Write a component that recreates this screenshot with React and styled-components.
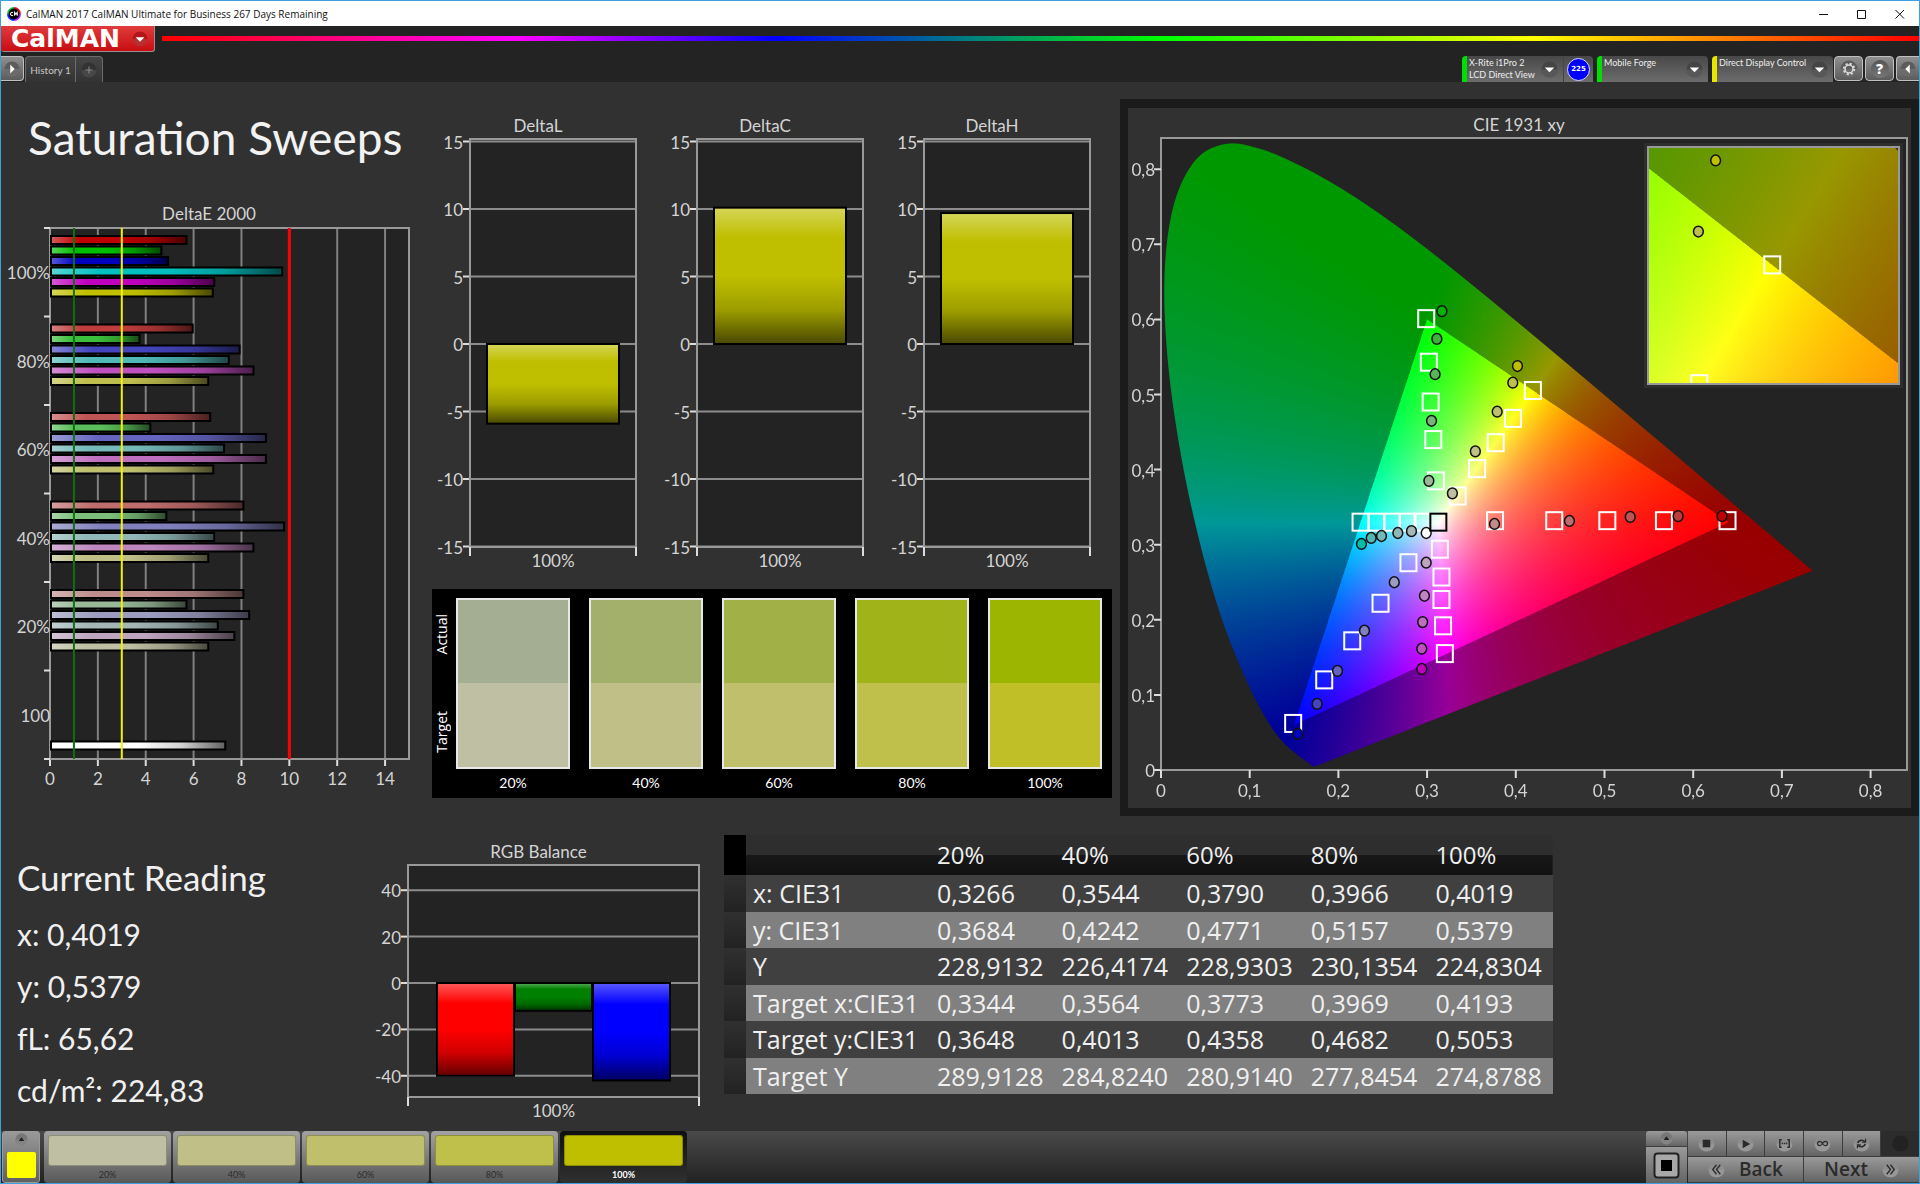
import React, { useEffect, useRef } from "react";
import styled, { createGlobalStyle, css } from "styled-components";

const GlobalStyle = createGlobalStyle`
  :root {
    --bg: #313131;
    --plot: #232323;
    --line: #8c8c8c;
    --text: #d4d4d4;
  }

  *, *::before, *::after {
    box-sizing: border-box;
  }

  body {
    margin: 0;
    background-color: var(--bg);
    font-family: Lato, "Open Sans", sans-serif;
    color: #f0f0f0;
  }

  button {
    padding: 0;
    border: 0;
    font: inherit;
    color: inherit;
    cursor: pointer;
  }

  svg {
    display: block;
  }
`;

/* ---------- window frame ---------- */

const Window = styled.div`
  display: flex;
  flex-direction: column;
  min-height: 100vh;
  border: 1px solid #3ea0dc;
`;

const TitleBar = styled.header`
  display: flex;
  align-items: center;
  height: 25px;
  padding: 0 14px 0 6px;
  gap: 5px;
  background-color: #fff;
  color: #111;
  font-family: "Open Sans", sans-serif;
  font-size: 10px;
`;

const WindowButtons = styled.div`
  display: flex;
  gap: 28px;
  margin-left: auto;
`;

const WindowButton = styled.button`
  width: 10px;
  height: 10px;
  background: none;
`;

const Chrome = styled.div`
  background-color: #232323;
`;

const BrandRow = styled.div`
  display: flex;
  align-items: flex-start;
  gap: 7px;
  height: 30px;
`;

const Brand = styled.button`
  display: flex;
  align-items: center;
  justify-content: space-between;
  width: 154px;
  height: 26px;
  padding: 0 6px 0 10px;
  border: solid #9a8f8f;
  border-width: 0 1px 1px 0;
  border-radius: 0 0 3px 3px;
  background: linear-gradient(#e03c3c, #c80d12);
  color: #fff;
  font-family: "DejaVu Sans", sans-serif;
  font-size: 25px;
  font-weight: 700;
  line-height: 24px;
`;

const Rainbow = styled.div`
  flex: 1;
  height: 5px;
  margin-top: 10px;
  background: linear-gradient(
    to right,
    #f00,
    #f0f 20%,
    #00f 35%,
    #0f0 57%,
    #ff0 78%,
    #f00
  );
`;

const Tabs = styled.div`
  display: flex;
  align-items: flex-end;
  height: 26px;
  gap: 1px;
`;

const TabGroup = styled.div`
  display: flex;
  height: 26px;
  border: 1px solid #6c6c6c;
  border-bottom: 0;
  border-radius: 4px 4px 0 0;
  background: linear-gradient(#464646, #333);
`;

const Tab = styled.button`
  display: flex;
  align-items: center;
  justify-content: center;
  width: ${({ $width }) => $width}px;
  border-right: ${({ $divided }) => ($divided ? "1px solid #6c6c6c" : 0)};
  background: none;
  color: #c8c8c8;
  font-size: 10px;
  white-space: nowrap;
`;

const Sources = styled.div`
  display: flex;
  align-items: flex-end;
  gap: 4px;
  margin-left: auto;
`;

const Source = styled.div`
  display: flex;
  align-items: center;
  width: ${({ $width }) => $width}px;
  height: 26px;
  border-left: 5px solid ${({ $color }) => $color};
  border-radius: 4px 4px 0 0;
  background: linear-gradient(#484848, #6c6c6c);
`;

const SourceButton = styled.button`
  flex: 1;
  display: flex;
  align-items: center;
  justify-content: space-between;
  height: 26px;
  padding: 0 5px 0 2px;
  background: none;
  color: #eee;
  font-size: 9px;
  line-height: 12px;
  text-align: left;
`;

const SourceName = styled.span`
  align-self: flex-start;
  padding-top: 1px;
  white-space: pre;
`;

const Level = styled.span`
  display: flex;
  align-items: center;
  justify-content: center;
  width: 30px;
  height: 26px;
  border-left: 1px solid #444;
`;

const LevelDot = styled.span`
  width: 23px;
  height: 23px;
  border: 1px solid #d8d8ff;
  border-radius: 50%;
  background-color: #00f;
  color: #fff;
  font-family: "DejaVu Sans", sans-serif;
  font-size: 7px;
  font-weight: 700;
  line-height: 21px;
  text-align: center;
`;

const Tools = styled.div`
  display: flex;
  gap: 2px;
`;

const ToolButton = styled.button`
  display: flex;
  align-items: center;
  justify-content: ${({ $cut }) => ($cut === "right" ? "flex-start" : "center")};
  width: ${({ $cut }) => ($cut ? 23 : 29)}px;
  height: 25px;
  margin-bottom: 1px;
  padding: 0 3px;
  border: 1px solid #c0c0c0;
  border-radius: 4px;
  background: linear-gradient(#8f8f8f, #5c5c5c);

  ${({ $cut }) =>
    $cut === "left" &&
    css`
      border-left: 0;
      border-radius: 0 4px 4px 0;
    `}
  ${({ $cut }) =>
    $cut === "right" &&
    css`
      border-right: 0;
      border-radius: 4px 0 0 4px;
    `}
`;

/* ---------- workspace ---------- */

const Main = styled.main`
  flex: 1;
  display: flex;
  flex-direction: column;
  background-color: var(--bg);
`;

const TopGrid = styled.section`
  display: grid;
  grid-template-columns: 431fr 688fr 799fr;
  align-items: start;
`;

const BottomGrid = styled.section`
  display: grid;
  grid-template-columns: 363fr 350fr 1205fr;
  align-items: start;
  padding-top: 19px;
`;

const Heading = styled.h1`
  margin: 24px 0 22px 27px;
  font-size: 46px;
  font-weight: 400;
  line-height: 64px;
  color: #f2f2f2;
`;

const Chart = styled.svg`
  width: 100%;
  height: auto;
  font-family: Lato, "Open Sans", sans-serif;
  font-size: 17px;
`;

const DeltaCharts = styled.div`
  display: grid;
  grid-template-columns: repeat(3, 1fr);
  padding: 27px 7px 10px 0;
`;

const Comparator = styled.div`
  display: flex;
  margin-right: 8px;
  padding: 9px 10px 0 0;
  height: 209px;
  background-color: #000;
  color: #fff;
  font-size: 14px;
`;

const SideLabels = styled.div`
  display: flex;
  flex-direction: column;
  justify-content: space-between;
  align-items: flex-start;
  width: 24px;
  height: 171px;
  padding: 16px 0;
  font-family: "Open Sans", sans-serif;
`;

const SideLabel = styled.span`
  writing-mode: vertical-rl;
  rotate: 180deg;
`;

const Swatches = styled.div`
  flex: 1;
  display: grid;
  grid-template-columns: repeat(5, 1fr);
  column-gap: 19px;
`;

const Swatch = styled.figure`
  margin: 0;
  text-align: center;
`;

const SwatchColor = styled.div`
  height: 171px;
  border: 2px solid #e8e8e8;
  background: linear-gradient(
    ${({ $actual }) => $actual} 50%,
    ${({ $target }) => $target} 50%
  );
`;

const SwatchLabel = styled.figcaption`
  line-height: 27px;
`;

const CiePanel = styled.div`
  margin-top: 17px;
  padding: 9px 8px 8px;
  background-color: #1b1b1b;
`;

const CieInner = styled.div`
  background-color: var(--bg);
`;

const Readings = styled.div`
  padding: 17px 0 0 16px;
`;

const ReadingTitle = styled.h2`
  margin: 0 0 6px;
  font-size: 35px;
  font-weight: 400;
  line-height: 50px;
`;

const Reading = styled.p`
  margin: 0;
  font-size: 30px;
  line-height: 52px;
`;

const Table = styled.table`
  width: 829px;
  height: 259px;
  margin-left: 10px;
  border-spacing: 0;
  font-family: "Open Sans", sans-serif;
  font-size: 25px;
  line-height: 36px;
  text-align: left;
  table-layout: fixed;

  th {
    font-weight: 400;
  }

  th, td {
    padding: 0 0 0 7px;
    white-space: nowrap;
  }

  th:first-child, td:first-child {
    width: 22px;
  }

  td:nth-child(2) {
    width: 184px;
  }
`;

const HeadRow = styled.tr`
  height: 40px;
  background: linear-gradient(#2e2e2e 50%, #181818 50%, #111);
  font-size: 24px;

  td:first-child {
    background-color: #000;
  }
`;

const BodyRow = styled.tr`
  background-color: ${({ $light }) => ($light ? "#808080" : "#404040")};

  td:first-child {
    background: linear-gradient(#303030, #222);
  }
`;

/* ---------- bottom bar ---------- */

const BottomBar = styled.footer`
  display: flex;
  height: 52px;
  padding-left: 1px;
  background: linear-gradient(#4a4a4a, #222);
`;

const PatternPicker = styled.button`
  display: flex;
  flex-direction: column;
  align-items: center;
  justify-content: space-between;
  width: 38px;
  margin-right: 4px;
  padding: 1px 0 4px;
  border: 1px solid #9a9a9a;
  border-radius: 3px;
  background: linear-gradient(#999, #606060);
`;

const PatternColor = styled.span`
  width: 29px;
  height: 26px;
  border-radius: 2px;
  background-color: #ff0;
`;

const PatternButton = styled.button`
  display: flex;
  flex-direction: column;
  align-items: center;
  width: 127px;
  margin-right: 2px;
  padding-top: 4px;
  border-radius: 4px;
  background: ${({ $active }) =>
    $active ? "linear-gradient(#101010, #303030)" : "linear-gradient(#a2a2a2, #585858)"};
  color: ${({ $active }) => ($active ? "#fff" : "#2b2b2b")};
  font-size: 9px;
  font-weight: ${({ $active }) => ($active ? 700 : 400)};
  line-height: 17px;

  &::before {
    content: "";
    width: 119px;
    height: 31px;
    border: 1px solid rgba(0, 0, 0, 0.25);
    border-radius: 3px;
    background-color: ${({ $color }) => $color};
  }
`;

const Transport = styled.div`
  display: flex;
  gap: 1px;
  margin-left: auto;
  color: #2b2b2b;
`;

const StopPanel = styled.div`
  display: flex;
  flex-direction: column;
  gap: 1px;
  width: 41px;
`;

const metal = css`
  display: flex;
  align-items: center;
  justify-content: center;
  background: linear-gradient(#9a9a9a, #646464);
`;

const StopTop = styled.button`
  ${metal}
  height: 15px;
  border-radius: 3px 3px 0 0;
`;

const StopMain = styled.button`
  ${metal}
  flex: 1;
`;

const TransportGrid = styled.div`
  display: grid;
  grid-template-columns: repeat(6, 1fr);
  grid-template-rows: 25px 25px;
  gap: 1px;
  width: 231px;
  background-color: #3c3c3c;
`;

const TransportButton = styled.button`
  ${metal}
  ${({ $off }) => $off && "background: #2c2c2c;"}
`;

const StepButton = styled.button`
  ${metal}
  grid-column: span 3;
  gap: 14px;
  color: #2b2b2b;
  font-family: "Open Sans", sans-serif;
  font-size: 19px;
  font-weight: 600;
  line-height: 25px;
`;

/* ---------- icons ---------- */

const glyphs = {
  down: <path d="M4 7h10l-5 5z" fill="#fff" />,
  left: <path d="M11 4v10L6 9z" fill="#fff" />,
  right: <path d="M7 4v10l5-5z" fill="#fff" />,
  up: <path d="M5 11h8L9 6z" fill="#222" />,
  plus: <path d="M9 5v8M5 9h8" stroke="#8a8a8a" strokeWidth="1.200" fill="none" />,
  stop: <path d="M5 5h8v8H5z" fill="#2b2b2b" />,
  play: <path d="M6 5v9l8-4.500z" fill="#2b2b2b" />,
  frames: (
    <path
      d="M6 5H4v8h2M12 5h2v8h-2M6 9h1.500M8.300 9h1.500M10.500 9h1.500"
      stroke="#2b2b2b"
      strokeWidth="1.500"
      fill="none"
    />
  ),
  loop: (
    <path
      d="M9 9c-1-1.600-1.800-2.300-3-2.300a2.300 2.300 0 0 0 0 4.600c1.200 0 2-.7 3-2.300s1.800-2.300 3-2.300a2.300 2.300 0 0 1 0 4.600c-1.200 0-2-.7-3-2.300z"
      stroke="#2b2b2b"
      strokeWidth="1.300"
      fill="none"
    />
  ),
  refresh: (
    <g stroke="#2b2b2b" strokeWidth="1.700" fill="none">
      <path d="M5 8.500C5.500 5.500 10 4.500 12.500 7M13 9.500c-.5 3-5 4-7.500 1.500" />
      <path d="M13.300 4v3.600H9.700M4.700 14v-3.600h3.600" strokeWidth="1.300" />
    </g>
  ),
  back: <path d="M9 4L5 9l4 5M13 4L9 9l4 5" stroke="#2b2b2b" strokeWidth="1.400" fill="none" />,
  next: <path d="M5 4l4 5-4 5M9 4l4 5-4 5" stroke="#2b2b2b" strokeWidth="1.400" fill="none" />,
  gear: (
    <g stroke="#ddd" fill="none">
      <circle cx="9" cy="9" r="4" strokeWidth="1.500" />
      <circle cx="9" cy="9" r="5.300" strokeWidth="1.800" strokeDasharray="2.080 2.080" />
    </g>
  ),
  none: null,
};

const Knob = ({ icon, size = 18, tone = "#5c5c5c" }) => (
  <svg width={size} height={size} viewBox="0 0 18 18" aria-hidden="true">
    <circle cx="9" cy="9" r="8.500" fill={tone} />
    {icon !== "none" && (
      <path d="M.5 9a8.500 8.500 0 0 0 17 0z" fill="#fff" opacity=".1" />
    )}
    {glyphs[icon]}
  </svg>
);

const HelpKnob = styled.span`
  width: 18px;
  height: 18px;
  border-radius: 50%;
  background: linear-gradient(#555, #777);
  color: #fff;
  font-family: "Open Sans", sans-serif;
  font-size: 14px;
  font-weight: 800;
  line-height: 18px;
`;

const AppIcon = () => (
  <svg width="14" height="14" viewBox="0 0 13 13" aria-hidden="true">
    <path d="M6.500 0A6.500 6.500 0 0 1 13 6.500H6.500z" fill="#e8102c" />
    <path d="M13 6.500A6.500 6.500 0 0 1 6.500 13V6.500z" fill="#b020f0" />
    <path d="M6.500 13A6.500 6.500 0 0 1 0 6.500h6.500z" fill="#1030ff" />
    <path d="M0 6.500A6.500 6.500 0 0 1 6.500 0v6.500z" fill="#10c040" />
    <circle cx="6.500" cy="6.500" r="5" fill="#000" />
    <path
      d="M5.500 5.200a1.500 1.500 0 1 0 0 2.600M7 8.200V5l1.200 1.800L9.500 5v3.200"
      stroke="#fff"
      fill="none"
    />
  </svg>
);

/* ---------- charts ---------- */

const Gloss = ({ id, horizontal }) => (
  <linearGradient id={id} x1="0" y1="0" x2={horizontal ? 1 : 0} y2={horizontal ? 0 : 1}>
    <stop offset="0" stopColor="#fff" stopOpacity=".35" />
    <stop offset=".22" stopColor="#fff" stopOpacity="0" />
    <stop offset=".5" stopColor="#000" stopOpacity="0" />
    <stop offset=".75" stopColor="#000" stopOpacity=".18" />
    <stop offset="1" stopColor="#000" stopOpacity=".62" />
  </linearGradient>
);

const ColumnChart = ({ id, title, size, plot, zero, unit, ticks, bars }) => {
  const [width, height] = size;
  const { left, top, right, bottom } = plot;
  const mid = (left + right) / 2;

  return (
    <Chart viewBox={`0 0 ${width} ${height}`} role="img" aria-label={title}>
      <defs>
        <Gloss id={id} />
      </defs>
      <text x={mid - 15} y={top - 7} textAnchor="middle" fill="var(--text)">
        {title}
      </text>
      <rect x={left} y={top} width={right - left} height={bottom - top} fill="var(--plot)" />
      {ticks.map((tick) => {
        const y = zero - tick * unit;
        return (
          <g key={tick}>
            <path d={`M${left} ${y}H${right}`} stroke="var(--line)" strokeWidth="2" />
            <path d={`M${left - 7} ${y}h7`} stroke="#ddd" strokeWidth="2" />
            <text x={left - 7} y={y + 7} textAnchor="end" fill="var(--text)">
              {tick}
            </text>
          </g>
        );
      })}
      <rect
        x={left}
        y={top}
        width={right - left}
        height={bottom - top}
        fill="none"
        stroke="#999"
        strokeWidth="2"
      />
      <path
        d={`M${left} ${bottom}v9M${right} ${bottom}v9`}
        stroke="#ddd"
        strokeWidth="2"
      />
      {bars.map(({ x, w, value, color }) => {
        const rect = {
          x,
          y: value > 0 ? zero - value * unit : zero,
          width: w,
          height: Math.abs(value) * unit,
        };
        return (
          <g key={color}>
            <rect {...rect} fill={color} />
            <rect {...rect} fill={`url(#${id})`} stroke="#000" strokeWidth="2" />
          </g>
        );
      })}
      <text x={mid} y={bottom + 20} textAnchor="middle" fill="var(--text)">
        100%
      </text>
    </Chart>
  );
};

const sweeps = [
  {
    label: "100%",
    bars: [[5.66, "#bf0000"], [4.61, "#00bf00"], [4.89, "#0000bf"], [9.66, "#00bfbf"], [6.82, "#bf00bf"], [6.76, "#bfbf00"]],
  },
  {
    label: "80%",
    bars: [[5.92, "#bf3c3c"], [3.7, "#3cbf3c"], [7.88, "#4444bf"], [7.43, "#50b8b8"], [8.46, "#bf50bf"], [6.57, "#bfbf50"]],
  },
  {
    label: "60%",
    bars: [[6.65, "#bf5454"], [4.15, "#5abf5a"], [8.98, "#6464bf"], [7.23, "#74b8b8"], [8.98, "#bf6ebf"], [6.78, "#bfbf6e"]],
  },
  {
    label: "40%",
    bars: [[8.04, "#bf6c6c"], [4.82, "#7cbf7c"], [9.74, "#8080bf"], [6.82, "#90b8b8"], [8.46, "#bf86bf"], [6.57, "#bfbf88"]],
  },
  {
    label: "20%",
    bars: [[8.04, "#bf8c8c"], [5.66, "#98b898"], [8.28, "#9c9cbf"], [6.97, "#a4b8b8"], [7.66, "#bfa4bf"], [6.57, "#bfbfa4"]],
  },
  { label: "100", bars: [[7.28, "#ffffff"]] },
];

const DeltaEChart = () => {
  const left = 49;
  const right = 408;
  const top = 36;
  const bottom = 567;
  const band = (bottom - top) / 6;
  const slotHeight = band / 8.43;
  const unit = (right - left) / 15;

  return (
    <Chart viewBox="0 0 431 600" role="img" aria-label="DeltaE 2000">
      <defs>
        <Gloss id="gloss-e" horizontal />
      </defs>
      <text x="208" y="28" textAnchor="middle" fill="var(--text)">
        DeltaE 2000
      </text>
      <rect x={left} y={top} width={right - left} height={bottom - top} fill="var(--plot)" />
      {[0, 2, 4, 6, 8, 10, 12, 14].map((tick) => {
        const x = left + tick * unit;
        return (
          <g key={tick}>
            <path d={`M${x} ${top}V${bottom}`} stroke="#808080" strokeWidth="2" />
            <path d={`M${x} ${bottom}v7`} stroke="#ddd" strokeWidth="2" />
            <text x={x} y={bottom + 26} textAnchor="middle" fill="var(--text)">
              {tick}
            </text>
          </g>
        );
      })}
      <rect
        x={left}
        y={top}
        width={right - left}
        height={bottom - top}
        fill="none"
        stroke="#999"
        strokeWidth="2"
      />
      {[0, 1, 2, 3, 4, 5, 6].map((n) => (
        <path
          key={n}
          d={`M${left - 6} ${top + n * band}h6`}
          stroke="#ddd"
          strokeWidth="2"
        />
      ))}
      {sweeps.map(({ label, bars }, row) => (
        <g key={label}>
          <text x={left} y={top + row * band + 51} textAnchor="end" fill="var(--text)">
            {label}
          </text>
          {bars.map(([value, color], i) => {
            const slot = bars.length === 1 ? 6 : i;
            const rect = {
              x: left + 1,
              y: top + row * band + slot * slotHeight + 8,
              width: value * unit,
              height: 8,
            };
            return (
              <g key={i}>
                <rect {...rect} fill={color} />
                <rect {...rect} fill="url(#gloss-e)" stroke="#000" strokeWidth="2" />
              </g>
            );
          })}
        </g>
      ))}
      <path d={`M${left + unit} ${top}V${bottom}`} stroke="#107010" strokeWidth="2" />
      <path d={`M${left + unit * 3} ${top}V${bottom}`} stroke="#f2f200" strokeWidth="2" />
      <path d={`M${left + unit * 10} ${top}V${bottom}`} stroke="#f00" strokeWidth="3" />
    </Chart>
  );
};

// CIE 1931 2° spectral locus, 380-700 nm
const locus = [
  [0.1741, 0.005], [0.1726, 0.0048], [0.1689, 0.0069], [0.1644, 0.0109], [0.1566, 0.0177],
  [0.144, 0.0297], [0.1355, 0.0399], [0.1241, 0.0578], [0.1096, 0.0868], [0.0913, 0.1327],
  [0.0687, 0.2007], [0.0454, 0.295], [0.0235, 0.4127], [0.0082, 0.5384], [0.0039, 0.6548],
  [0.0139, 0.7502], [0.0389, 0.812], [0.0743, 0.8338], [0.1142, 0.8262], [0.1547, 0.8059],
  [0.1929, 0.7816], [0.2296, 0.7543], [0.2658, 0.7243], [0.3016, 0.6923], [0.3373, 0.6589],
  [0.3731, 0.6245], [0.4087, 0.5896], [0.4441, 0.5547], [0.4788, 0.5202], [0.5125, 0.4866],
  [0.5448, 0.4544], [0.5752, 0.4242], [0.6029, 0.3965], [0.627, 0.3725], [0.6482, 0.3514],
  [0.6658, 0.334], [0.6915, 0.3083], [0.7079, 0.292], [0.719, 0.2809], [0.7347, 0.2653],
];

const paint = (canvas, { x0, x1, y0, y1 }) => {
  const { width, height } = canvas;
  const ctx = canvas.getContext("2d");
  const image = ctx.createImageData(width, height);

  for (let row = 0; row < height; row += 1) {
    const y = Math.max(y1 - ((row + 0.5) / height) * (y1 - y0), 0.0001);
    for (let col = 0; col < width; col += 1) {
      const x = x0 + ((col + 0.5) / width) * (x1 - x0);
      const z = 1 - x - y;
      const rgb = [
        3.2406 * x - 1.5372 * y - 0.4986 * z,
        -0.9689 * x + 1.8758 * y + 0.0415 * z,
        0.0557 * x - 0.204 * y + 1.057 * z,
      ];
      // colours beyond the Rec. 709 triangle are dimmed
      const level = Math.min(...rgb) < 0 ? 152 : 255;
      const max = Math.max(...rgb);
      const at = (row * width + col) * 4;
      rgb.forEach((c, i) => {
        image.data[at + i] = (Math.max(c, 0) / max) * level;
      });
      image.data[at + 3] = 255;
    }
  }
  ctx.putImageData(image, 0, 0);

  // smooth closed outline through the locus points
  const points = locus.map(([x, y]) => [
    ((x - x0) / (x1 - x0)) * width,
    ((y1 - y) / (y1 - y0)) * height,
  ]);
  const at = (i) => points[Math.min(Math.max(i, 0), points.length - 1)];
  ctx.globalCompositeOperation = "destination-in";
  ctx.beginPath();
  ctx.moveTo(...points[0]);
  for (let i = 0; i < points.length - 1; i += 1) {
    const [a, b, c, d] = [at(i - 1), at(i), at(i + 1), at(i + 2)];
    ctx.bezierCurveTo(
      b[0] + (c[0] - a[0]) / 6,
      b[1] + (c[1] - a[1]) / 6,
      c[0] - (d[0] - b[0]) / 6,
      c[1] - (d[1] - b[1]) / 6,
      c[0],
      c[1]
    );
  }
  ctx.closePath();
  ctx.fill();
};

const GamutCanvas = styled.canvas`
  display: block;
  width: 100%;
  height: 100%;
`;

const Gamut = ({ width, height, domain }) => {
  const ref = useRef(null);
  useEffect(() => paint(ref.current, domain), [domain]);
  return <GamutCanvas ref={ref} width={width * 2} height={height * 2} />;
};

const targets = [
  [0.299, 0.601], [0.302, 0.543], [0.304, 0.49], [0.307, 0.44], [0.31, 0.385],
  [0.4193, 0.5053], [0.3969, 0.4682], [0.3773, 0.4358], [0.3564, 0.4013], [0.3344, 0.3648],
  [0.225, 0.33], [0.243, 0.33], [0.2604, 0.33], [0.278, 0.33], [0.295, 0.33],
  [0.3766, 0.332], [0.4433, 0.332], [0.5032, 0.332], [0.567, 0.332], [0.6387, 0.332],
  [0.3144, 0.294], [0.3162, 0.257], [0.3162, 0.227], [0.318, 0.192], [0.32, 0.155],
  [0.279, 0.276], [0.2475, 0.222], [0.2156, 0.172], [0.184, 0.12], [0.149, 0.062],
];

const actuals = [
  [0.3167, 0.611, "#00b400"], [0.311, 0.574, "#3cb43c"], [0.309, 0.527, "#5ab45a"],
  [0.305, 0.465, "#78b478"], [0.302, 0.385, "#98b898"],
  [0.4019, 0.5379, "#bfbf00"], [0.3966, 0.5157, "#bfbf50"], [0.379, 0.4771, "#bfbf6e"],
  [0.3544, 0.4242, "#bfbf88"], [0.3285, 0.3684, "#bfbfa4"],
  [0.226, 0.301, "#00bfa8"], [0.237, 0.309, "#50b8b0"], [0.2486, 0.3116, "#74b8b8"],
  [0.267, 0.3156, "#90b8b8"], [0.2824, 0.318, "#a4b8b8"], [0.299, 0.3156, "#ffffff"],
  [0.376, 0.3276, "#bf8c8c"], [0.4605, 0.3316, "#bf6c6c"], [0.529, 0.337, "#bf5454"],
  [0.583, 0.338, "#bf3c3c"], [0.6325, 0.338, "#bf0000"],
  [0.299, 0.276, "#bfa4bf"], [0.297, 0.232, "#bf86bf"], [0.295, 0.197, "#bf6ebf"],
  [0.294, 0.1615, "#bf50bf"], [0.294, 0.1345, "#bf00bf"],
  [0.263, 0.25, "#9c9cbf"], [0.2294, 0.1855, "#8080bf"], [0.199, 0.132, "#6464bf"],
  [0.176, 0.088, "#4444bf"], [0.154, 0.048, "#0000bf"],
];

const Markers = ({ px, py }) => (
  <>
    {targets.map(([x, y]) => (
      <rect
        key={`${x}-${y}`}
        x={px(x) - 8}
        y={py(y) - 8.5}
        width="16"
        height="17"
        fill="none"
        stroke="#fff"
        strokeWidth="2"
      />
    ))}
    {actuals.map(([x, y, color]) => (
      <ellipse
        key={`${x}-${y}`}
        cx={px(x)}
        cy={py(y)}
        rx="4.900"
        ry="5.400"
        fill={color}
        stroke="#111"
        strokeWidth="1.500"
      />
    ))}
  </>
);

const fullDomain = { x0: 0, x1: 0.841, y0: 0, y1: 0.8415 };
const insetDomain = { x0: 0.3811, x1: 0.4583, y0: 0.4681, y1: 0.5421 };

const CieChart = () => {
  const left = 33;
  const bottom = 662;
  const px = (x) => left + x * 887;
  const py = (y) => bottom - y * 751;
  const inset = { x: 520, y: 39, width: 251, height: 237 };
  const ix = (x) => inset.x + ((x - insetDomain.x0) / 0.0772) * inset.width;
  const iy = (y) => inset.y + ((insetDomain.y1 - y) / 0.074) * inset.height;
  const steps = [0, 1, 2, 3, 4, 5, 6, 7, 8];
  const label = (n) => (n ? `0,${n}` : "0");

  return (
    <Chart viewBox="0 0 783 700" role="img" aria-label="CIE 1931 xy">
      <clipPath id="inset-clip">
        <rect {...inset} />
      </clipPath>
      <text x="391" y="23" textAnchor="middle" fill="var(--text)">
        CIE 1931 xy
      </text>
      <rect x={left} y="30" width="746" height="632" fill="var(--plot)" />
      <foreignObject x={left} y="30" width="746" height="632">
        <Gamut width={746} height={632} domain={fullDomain} />
      </foreignObject>
      <rect x={left} y="30" width="746" height="632" fill="none" stroke="#999" strokeWidth="2" />
      {steps.map((n) => (
        <g key={n} fill="var(--text)">
          <path
            d={`M${px(n / 10)} ${bottom}v8M${left} ${py(n / 10)}h-7`}
            stroke="#ddd"
            strokeWidth="2"
          />
          <text x={px(n / 10)} y={bottom + 27} textAnchor="middle">
            {label(n)}
          </text>
          <text x={left - 6} y={py(n / 10) + 7} textAnchor="end">
            {label(n)}
          </text>
        </g>
      ))}
      <Markers px={px} py={py} />
      <rect
        x={px(0.3127) - 8}
        y={py(0.33) - 8.5}
        width="16"
        height="17"
        fill="none"
        stroke="#000"
        strokeWidth="2"
      />

      <rect x="516" y="35" width="259" height="245" fill="#2e2e2e" />
      <foreignObject {...inset}>
        <Gamut width={251} height={237} domain={insetDomain} />
      </foreignObject>
      <g clipPath="url(#inset-clip)">
        <Markers px={ix} py={iy} />
      </g>
      <rect {...inset} fill="none" stroke="#999" strokeWidth="2" />
    </Chart>
  );
};

/* ---------- data ---------- */

const deltaCharts = [
  { title: "DeltaL", value: -5.9 },
  { title: "DeltaC", value: 10.1 },
  { title: "DeltaH", value: 9.7 },
];

const rgbBars = [
  { x: 73, w: 77, value: -40, color: "#ff0000" },
  { x: 151, w: 77, value: -12, color: "#008000" },
  { x: 229, w: 77, value: -42, color: "#0000ff" },
];

const swatches = [
  { label: "20%", actual: "#a4ae92", target: "#bfbfa3", pattern: "#bfbfa3" },
  { label: "40%", actual: "#a2b06c", target: "#bfbf87", pattern: "#bfbf87" },
  { label: "60%", actual: "#a1b148", target: "#bfbf6c", pattern: "#bfbf6c" },
  { label: "80%", actual: "#a0b318", target: "#bfbf4c", pattern: "#bfbf4c" },
  { label: "100%", actual: "#9bb500", target: "#c1bf28", pattern: "#bfbf00" },
];

const readings = ["x: 0,4019", "y: 0,5379", "fL: 65,62", "cd/m²: 224,83"];

const rows = [
  ["x: CIE31", "0,3266", "0,3544", "0,3790", "0,3966", "0,4019"],
  ["y: CIE31", "0,3684", "0,4242", "0,4771", "0,5157", "0,5379"],
  ["Y", "228,9132", "226,4174", "228,9303", "230,1354", "224,8304"],
  ["Target x:CIE31", "0,3344", "0,3564", "0,3773", "0,3969", "0,4193"],
  ["Target y:CIE31", "0,3648", "0,4013", "0,4358", "0,4682", "0,5053"],
  ["Target Y", "289,9128", "284,8240", "280,9140", "277,8454", "274,8788"],
];

const sources = [
  { name: "X-Rite i1Pro 2\nLCD Direct View", color: "#00e000", width: 131, level: 225 },
  { name: "Mobile Forge", color: "#00e000", width: 111 },
  { name: "Direct Display Control", color: "#e6e600", width: 121 },
];

const transport = ["stop", "play", "frames", "loop", "refresh", "none"];

const App = () => (
  <Window>
    <GlobalStyle />
    <TitleBar>
      <AppIcon />
      CalMAN 2017 CalMAN Ultimate for Business 267 Days Remaining
      <WindowButtons>
        {[
          ["Minimize", "M0 5.500h9"],
          ["Maximize", "M.5 1.500h8v8h-8z"],
          ["Close", "M.5 1l8.500 8.500M9 1L.5 9.500"],
        ].map(([name, d]) => (
          <WindowButton key={name} aria-label={name}>
            <svg width="10" height="10" viewBox="0 0 10 10">
              <path d={d} stroke="#111" fill="none" />
            </svg>
          </WindowButton>
        ))}
      </WindowButtons>
    </TitleBar>

    <Chrome>
      <BrandRow>
        <Brand>
          CalMAN
          <Knob icon="down" tone="#b3161a" size={16} />
        </Brand>
        <Rainbow />
      </BrandRow>
      <Tabs>
        <ToolButton $cut="left" aria-label="Expand">
          <Knob icon="right" />
        </ToolButton>
        <TabGroup>
          <Tab $width={50} $divided>
            History 1
          </Tab>
          <Tab $width={26} aria-label="Add tab">
            <Knob icon="plus" size={16} tone="#333" />
          </Tab>
        </TabGroup>
        <Sources>
          {sources.map(({ name, color, width, level }) => (
            <Source key={name} $color={color} $width={width}>
              <SourceButton>
                <SourceName>{name}</SourceName>
                <Knob icon="down" size={17} tone="#444" />
              </SourceButton>
              {level && (
                <Level>
                  <LevelDot>{level}</LevelDot>
                </Level>
              )}
            </Source>
          ))}
        </Sources>
        <Tools>
          <ToolButton aria-label="Settings">
            <Knob icon="gear" />
          </ToolButton>
          <ToolButton aria-label="Help">
            <HelpKnob>?</HelpKnob>
          </ToolButton>
          <ToolButton $cut="right" aria-label="Collapse">
            <Knob icon="left" />
          </ToolButton>
        </Tools>
      </Tabs>
    </Chrome>

    <Main>
      <TopGrid>
        <div>
          <Heading>Saturation Sweeps</Heading>
          <DeltaEChart />
        </div>
        <div>
          <DeltaCharts>
            {deltaCharts.map(({ title, value }) => (
              <ColumnChart
                key={title}
                id={`gloss-${title}`}
                title={title}
                size={[227, 470]}
                plot={{ left: 38, top: 30, right: 204, bottom: 438 }}
                zero={235}
                unit={13.5}
                ticks={[15, 10, 5, 0, -5, -10, -15]}
                bars={[{ x: 55, w: 132, value, color: "#bfbf00" }]}
              />
            ))}
          </DeltaCharts>
          <Comparator>
            <SideLabels>
              <SideLabel>Actual</SideLabel>
              <SideLabel>Target</SideLabel>
            </SideLabels>
            <Swatches>
              {swatches.map(({ label, actual, target }) => (
                <Swatch key={label}>
                  <SwatchColor $actual={actual} $target={target} />
                  <SwatchLabel>{label}</SwatchLabel>
                </Swatch>
              ))}
            </Swatches>
          </Comparator>
        </div>
        <CiePanel>
          <CieInner>
            <CieChart />
          </CieInner>
        </CiePanel>
      </TopGrid>

      <BottomGrid>
        <Readings>
          <ReadingTitle>Current Reading</ReadingTitle>
          {readings.map((reading) => (
            <Reading key={reading}>{reading}</Reading>
          ))}
        </Readings>
        <ColumnChart
          id="gloss-rgb"
          title="RGB Balance"
          size={[350, 289]}
          plot={{ left: 44, top: 30, right: 335, bottom: 262 }}
          zero={148}
          unit={2.32}
          ticks={[40, 20, 0, -20, -40]}
          bars={rgbBars}
        />
        <Table>
          <thead>
            <HeadRow>
              <td />
              <td />
              {swatches.map(({ label }) => (
                <th key={label} scope="col">
                  {label}
                </th>
              ))}
            </HeadRow>
          </thead>
          <tbody>
            {rows.map(([name, ...values], i) => (
              <BodyRow key={name} $light={i % 2 === 1}>
                <td />
                <th scope="row">{name}</th>
                {values.map((value) => (
                  <td key={value}>{value}</td>
                ))}
              </BodyRow>
            ))}
          </tbody>
        </Table>
      </BottomGrid>
    </Main>

    <BottomBar>
      <PatternPicker aria-label="Pattern colour">
        <Knob icon="up" size={13} tone="#777" />
        <PatternColor />
      </PatternPicker>
      {swatches.map(({ label, pattern }) => (
        <PatternButton key={label} $color={pattern} $active={label === "100%"}>
          {label}
        </PatternButton>
      ))}
      <Transport>
        <StopPanel>
          <StopTop aria-label="More">
            <Knob icon="up" size={13} tone="#777" />
          </StopTop>
          <StopMain aria-label="Stop all">
            <svg width="27" height="27" viewBox="0 0 27 27" aria-hidden="true">
              <rect x="1.500" y="1.500" width="24" height="24" rx="3" fill="#a8a8a8" stroke="#222" strokeWidth="2" />
              <path d="M8 8h11v11H8z" fill="#000" />
            </svg>
          </StopMain>
        </StopPanel>
        <TransportGrid>
          {transport.map((icon) => (
            <TransportButton key={icon} $off={icon === "none"} aria-label={icon}>
              <Knob icon={icon} size={17} tone={icon === "none" ? "#222" : "#8c8c8c"} />
            </TransportButton>
          ))}
          <StepButton>
            <Knob icon="back" size={17} tone="#8c8c8c" />
            Back
          </StepButton>
          <StepButton>
            Next
            <Knob icon="next" size={17} tone="#8c8c8c" />
          </StepButton>
        </TransportGrid>
      </Transport>
    </BottomBar>
  </Window>
);

export default App;
